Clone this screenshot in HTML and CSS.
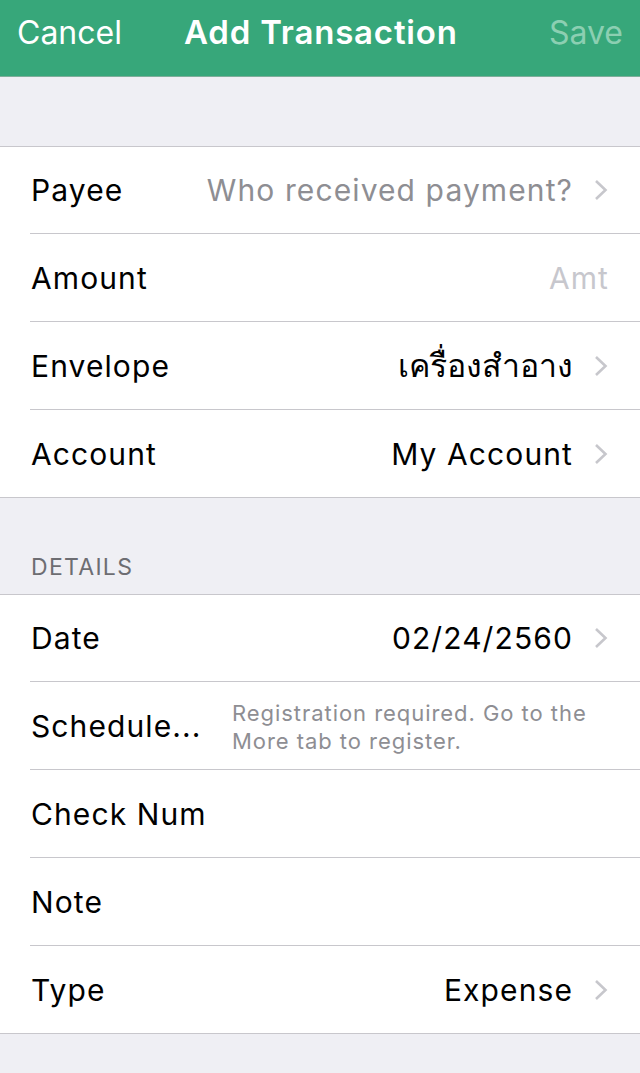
FILE: index.html
```html
<!DOCTYPE html>
<html lang="en">
<head>
  <meta charset="UTF-8">
  <title>Add Transaction</title>
  <meta name="viewport" content="width=device-width, initial-scale=1.0">
  <link rel="stylesheet" href="styles.css">
</head>
<body>

  <div class="navbar">
    <span class="nav-btn">Cancel</span>
    <span class="nav-title">Add Transaction</span>
    <span class="nav-btn disabled">Save</span>
  </div>

  <div class="spacer"></div>

  <div class="group">
    <div class="cell">
      <div class="cell-inner">
        <span class="label">Payee</span>
        <span class="value placeholder">Who received payment?</span>
        <svg class="chevron" viewBox="0 0 14 22"><path d="M2 2 L11.5 11 L2 20" /></svg>
      </div>
    </div>
    <div class="cell">
      <div class="cell-inner no-chevron">
        <span class="label">Amount</span>
        <span class="value faint">Amt</span>
      </div>
    </div>
    <div class="cell">
      <div class="cell-inner">
        <span class="label">Envelope</span>
        <span class="value thai">เครื่องสำอาง</span>
        <svg class="chevron" viewBox="0 0 14 22"><path d="M2 2 L11.5 11 L2 20" /></svg>
      </div>
    </div>
    <div class="cell">
      <div class="cell-inner">
        <span class="label">Account</span>
        <span class="value">My Account</span>
        <svg class="chevron" viewBox="0 0 14 22"><path d="M2 2 L11.5 11 L2 20" /></svg>
      </div>
    </div>
  </div>

  <div class="section-header">DETAILS</div>

  <div class="group">
    <div class="cell">
      <div class="cell-inner">
        <span class="label">Date</span>
        <span class="value">02/24/2560</span>
        <svg class="chevron" viewBox="0 0 14 22"><path d="M2 2 L11.5 11 L2 20" /></svg>
      </div>
    </div>
    <div class="cell">
      <div class="cell-inner no-chevron">
        <span class="label">Schedule...</span>
        <span class="note">Registration required. Go to the More tab to register.</span>
      </div>
    </div>
    <div class="cell">
      <div class="cell-inner no-chevron">
        <span class="label">Check Num</span>
      </div>
    </div>
    <div class="cell">
      <div class="cell-inner no-chevron">
        <span class="label">Note</span>
      </div>
    </div>
    <div class="cell">
      <div class="cell-inner">
        <span class="label">Type</span>
        <span class="value">Expense</span>
        <svg class="chevron" viewBox="0 0 14 22"><path d="M2 2 L11.5 11 L2 20" /></svg>
      </div>
    </div>
  </div>

</body>
</html>
```

FILE: styles.css
```css
* {
  box-sizing: border-box;
}

body {
  font-family: 'Inter', 'Liberation Sans', 'Noto Sans', sans-serif;
  background: #efeff4;
  color: #000;
  margin: 0;
  padding: 0;
  height: 1073px;
  overflow: hidden;
}

.navbar {
  height: 77px;
  background-color: #37a77a;
  border-bottom: 1px solid #7eae9a;
  display: flex;
  align-items: center;
  padding: 0 17px 12px 17px;
}

.nav-btn {
  color: #fff;
  font-size: 32px;
}

.nav-btn.disabled {
  margin-left: auto;
  color: #8ccfb2;
}

.nav-title {
  color: #fff;
  font-size: 33px;
  font-weight: 600;
  margin-left: 62px;
  letter-spacing: 0.8px;
}

.spacer {
  height: 69px;
}

.group {
  background: #fff;
  border-top: 1px solid #c8c7cc;
  border-bottom: 1px solid #c8c7cc;
}

.cell {
  padding-left: 30px;
}

.cell-inner {
  height: 88px;
  display: flex;
  align-items: center;
  border-bottom: 1px solid #c8c7cc;
  padding-right: 32px;
  padding-left: 1px;
}

.cell-inner.no-chevron {
  padding-right: 31px;
}

.cell:first-child .cell-inner,
.cell:last-child .cell-inner {
  height: 87px;
}

.cell:last-child .cell-inner {
  border-bottom: none;
}

.label {
  font-size: 30px;
  letter-spacing: 1.1px;
}

.value {
  margin-left: auto;
  font-size: 30px;
  letter-spacing: 1.1px;
}

.value.thai {
  font-size: 32px;
  letter-spacing: 0;
}

.value.placeholder {
  color: #8e8e93;
}

.value.faint {
  color: #c7c7cd;
}

.chevron {
  width: 14px;
  height: 22px;
  margin-left: 21px;
  fill: none;
  stroke: #c7c7cc;
  stroke-width: 2.6;
}

.note {
  margin-left: auto;
  width: 377px;
  font-size: 22px;
  line-height: 28px;
  letter-spacing: 0.95px;
  color: #8e8e93;
  padding-top: 2px;
}

.section-header {
  height: 96px;
  padding: 55px 0 0 31px;
  font-size: 23px;
  letter-spacing: 1.3px;
  color: #6d6d72;
}
```
